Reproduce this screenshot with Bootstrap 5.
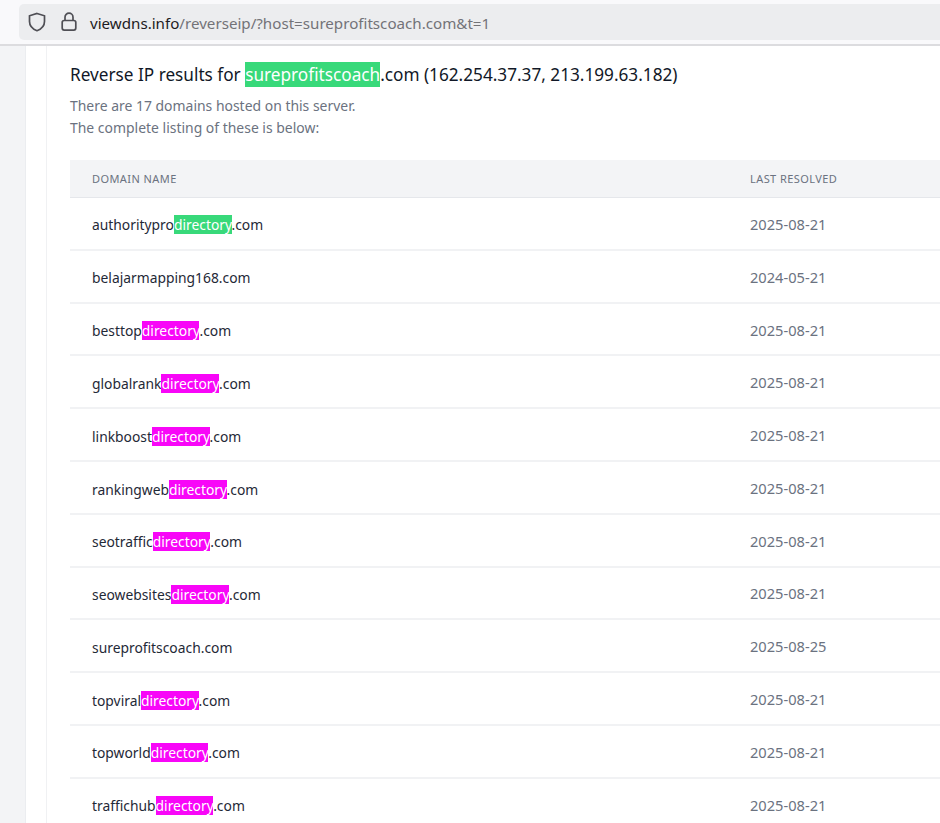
<!DOCTYPE html>
<html lang="en">
<head>
<meta charset="utf-8">
<title>Reverse IP</title>
<link href="https://cdn.jsdelivr.net/npm/bootstrap@5.3.0/dist/css/bootstrap.min.css" rel="stylesheet">
<style>
html,body{height:823px;overflow:hidden}
body{font-family:"Noto Sans","Inter",sans-serif;background:#fff;color:#1f2937}
.addr-shell{height:46px;background:#f9f9fb;border-bottom:2px solid #dcdcdf;padding:4px 0 4px 19px}
.addr-pill{height:36px;background:#ecedef;border-radius:5px 0 0 5px;padding-left:9px;font-size:15.15px;color:#737378;white-space:nowrap}
.addr-text{margin-left:13px;padding-top:2px}
.addr-lock{margin-left:15px}
.addr-host{color:#1c1b22}
.addr-ico{color:#4f4f55;flex:none}
.page-wrap{height:777px}
.rail-a{width:26px;background:#f3f4f6;border-right:1px solid #ebedf0;flex:none}
.rail-b{width:21px;background:#fff;border-right:1px solid #f0f1f3;flex:none}
.sheet{padding:17px 0 0 23px;flex:1;min-width:0;overflow:hidden}
.res-title{font-size:17.2px;line-height:24px;margin:0;color:#111827;font-weight:400}
.res-sub{font-size:13.95px;line-height:22px;margin:8px 0 21px;color:#6b7280}
.hit-green{background:#38d97a;color:#fff;padding:1px 0}
.hit-pink{background:#f806f8;color:#fff}
.dns-table{width:1000px;max-width:none;margin:0;table-layout:fixed}
.dns-table th{background:#f3f4f6;font-size:11px;font-weight:400;letter-spacing:.42px;color:#6b7280;padding:2px 22px 0;height:37px;vertical-align:middle;border-bottom:1px solid #e5e7eb;text-transform:uppercase}
.dns-table tbody tr{height:52.8px}
.dns-table td{font-size:13.85px;padding:5px 22px 0;vertical-align:middle;border-bottom:2px solid #f1f2f4;color:#1f2937}
.dns-table td .hit-green{padding:0}
.dns-table td.when{color:#6b7280;font-size:14.65px;padding-top:3px}
.col-dom{width:658px}
</style>
</head>
<body>
<div class="addr-shell">
  <div class="addr-pill d-flex align-items-center">
    <svg class="addr-ico" width="18" height="20" viewBox="0 0 18 20" fill="none" stroke="currentColor" stroke-width="1.7"><path d="M9 1.5 L16.5 3.8 V9.5 C16.5 14 13.5 17 9 18.7 C4.5 17 1.5 14 1.5 9.5 V3.8 Z"/></svg>
    <svg class="addr-ico addr-lock" width="16" height="20" viewBox="0 0 16 20" fill="none" stroke="currentColor" stroke-width="1.7"><rect x="1.2" y="8.5" width="13.6" height="9.6" rx="2"/><path d="M4 8.5 V5.2 a4 4 0 0 1 8 0 V8.5"/></svg>
    <span class="addr-text"><span class="addr-host">viewdns.info</span>/reverseip/?host=sureprofitscoach.com&amp;t=1</span>
  </div>
</div>
<div class="page-wrap d-flex">
  <div class="rail-a"></div>
  <div class="rail-b"></div>
  <div class="sheet">
    <h1 class="res-title">Reverse IP results for <span class="hit-green">sureprofitscoach</span>.com (162.254.37.37, 213.199.63.182)</h1>
    <p class="res-sub">There are 17 domains hosted on this server.<br>The complete listing of these is below:</p>
    <table class="table dns-table">
      <thead><tr><th class="col-dom">Domain Name</th><th>Last Resolved</th></tr></thead>
      <tbody>
        <tr><td>authoritypro<span class="hit-green">directory</span>.com</td><td class="when">2025-08-21</td></tr>
        <tr><td>belajarmapping168.com</td><td class="when">2024-05-21</td></tr>
        <tr><td>besttop<span class="hit-pink">directory</span>.com</td><td class="when">2025-08-21</td></tr>
        <tr><td>globalrank<span class="hit-pink">directory</span>.com</td><td class="when">2025-08-21</td></tr>
        <tr><td>linkboost<span class="hit-pink">directory</span>.com</td><td class="when">2025-08-21</td></tr>
        <tr><td>rankingweb<span class="hit-pink">directory</span>.com</td><td class="when">2025-08-21</td></tr>
        <tr><td>seotraffic<span class="hit-pink">directory</span>.com</td><td class="when">2025-08-21</td></tr>
        <tr><td>seowebsites<span class="hit-pink">directory</span>.com</td><td class="when">2025-08-21</td></tr>
        <tr><td>sureprofitscoach.com</td><td class="when">2025-08-25</td></tr>
        <tr><td>topviral<span class="hit-pink">directory</span>.com</td><td class="when">2025-08-21</td></tr>
        <tr><td>topworld<span class="hit-pink">directory</span>.com</td><td class="when">2025-08-21</td></tr>
        <tr><td>traffichub<span class="hit-pink">directory</span>.com</td><td class="when">2025-08-21</td></tr>
      </tbody>
    </table>
  </div>
</div>
<script src="https://cdn.jsdelivr.net/npm/bootstrap@5.3.0/dist/js/bootstrap.bundle.min.js"></script>
</body>
</html>
